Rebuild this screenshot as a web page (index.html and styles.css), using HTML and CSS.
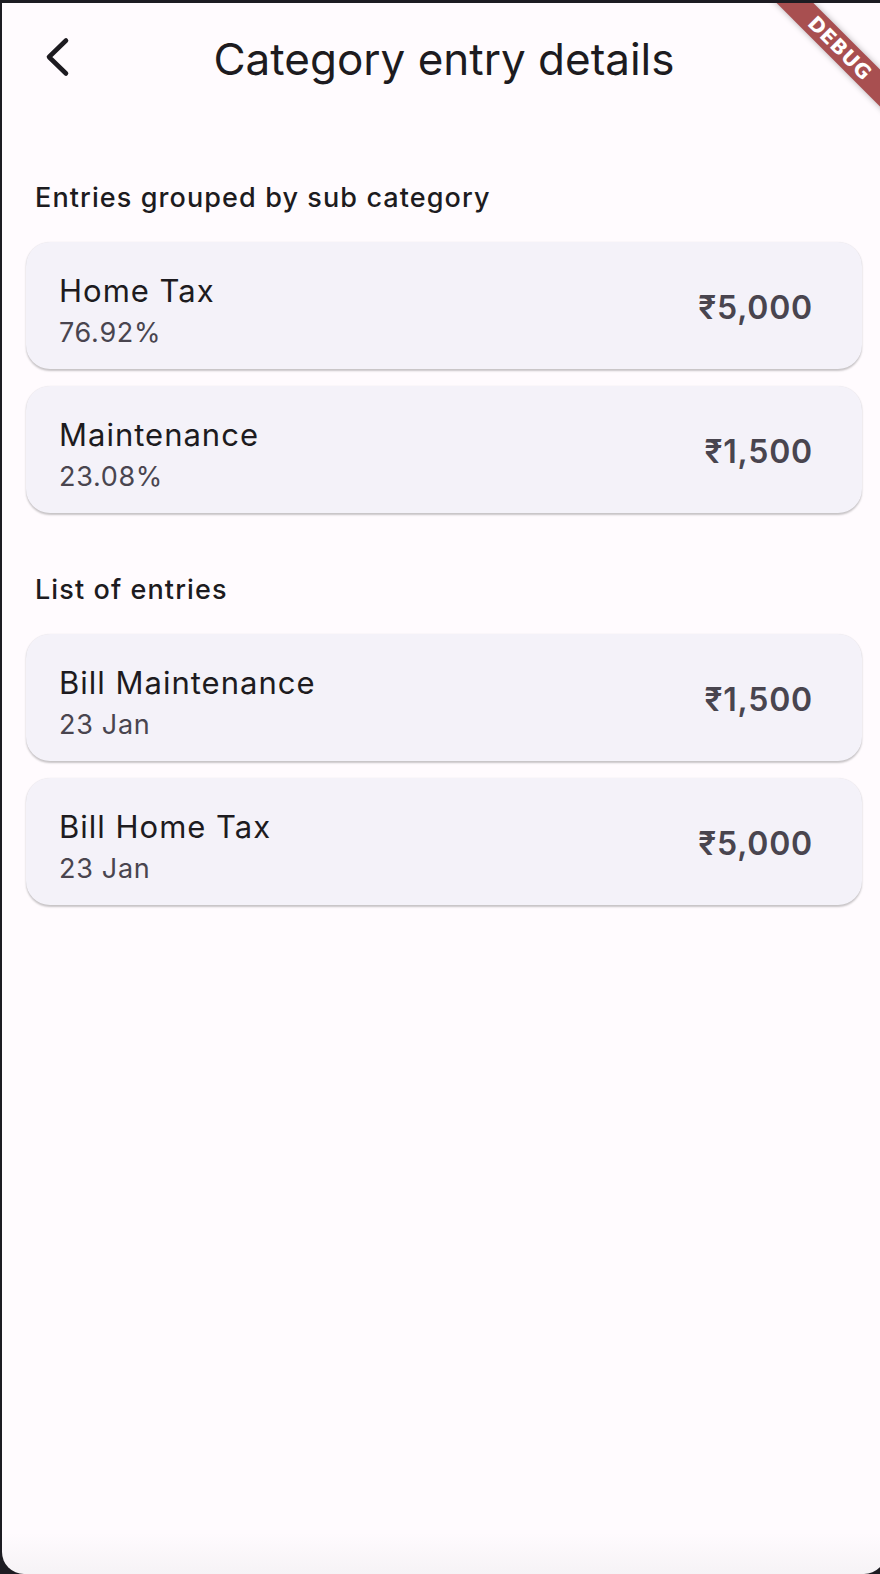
FILE: index.html
```html
<!DOCTYPE html>
<html lang="en">
<head>
<meta charset="utf-8">
<title>Category entry details</title>
<link rel="stylesheet" href="styles.css">
</head>
<body>
<div class="window">
  <header class="appbar">
    <div class="leading">
      <svg class="back" width="48" height="48" viewBox="0 0 48 48" aria-hidden="true">
        <path d="M32 5.5 L15 22 L32 38.5" fill="none" stroke="#1d1b20" stroke-width="4.6" stroke-linecap="round" stroke-linejoin="round"/>
      </svg>
    </div>
    <h1 class="title">Category entry details</h1>
    <div class="trailing"></div>
  </header>

  <main class="content">
    <h2 class="section-title first">Entries grouped by sub category</h2>
    <div class="card">
      <div class="texts">
        <div class="item-title">Home Tax</div>
        <div class="item-sub">76.92%</div>
      </div>
      <div class="amount">₹5,000</div>
    </div>
    <div class="card">
      <div class="texts">
        <div class="item-title">Maintenance</div>
        <div class="item-sub">23.08%</div>
      </div>
      <div class="amount">₹1,500</div>
    </div>

    <h2 class="section-title second">List of entries</h2>
    <div class="card">
      <div class="texts">
        <div class="item-title">Bill Maintenance</div>
        <div class="item-sub">23 Jan</div>
      </div>
      <div class="amount">₹1,500</div>
    </div>
    <div class="card">
      <div class="texts">
        <div class="item-title">Bill Home Tax</div>
        <div class="item-sub">23 Jan</div>
      </div>
      <div class="amount">₹5,000</div>
    </div>
  </main>

  <div class="debug-banner">DEBUG</div>
</div>
</body>
</html>
```

FILE: styles.css
```css
html, body {
  margin: 0;
  padding: 0;
  background: #1d1c22;
  overflow: hidden;
  width: 880px;
  height: 1574px;
}

body {
  font-family: Inter, "Noto Sans", "DejaVu Sans", sans-serif;
  color: #1d1b20;
}

.window {
  position: relative;
  margin: 3px 0 0 2px;
  width: 884px;
  height: 1571px;
  background: linear-gradient(to bottom, #fffbfe 0, #fffbfe 1530px, #f6f3f6 1571px);
  border-radius: 0 0 22px 22px;
  overflow: hidden;
}

.appbar {
  display: grid;
  grid-template-columns: 112px 1fr 112px;
  align-items: center;
  height: 112px;
}

.leading {
  display: flex;
  align-items: center;
  justify-content: center;
  height: 112px;
}

.back {
  display: block;
}

.title {
  margin: 0;
  text-align: center;
  font-size: 44px;
  font-weight: 400;
  line-height: 56px;
  letter-spacing: 0;
  color: #1d1b20;
}

.content {
  display: flex;
  flex-direction: column;
  gap: 17px;
  padding: 0 24px;
}

.section-title {
  margin: 0;
  padding-left: 9px;
  font-size: 27px;
  font-weight: 500;
  line-height: 36px;
  letter-spacing: 1.1px;
  color: #1d1b20;
}

.section-title.first {
  margin-top: 65px;
  margin-bottom: 9px;
}

.section-title.second {
  margin-top: 42px;
  margin-bottom: 9px;
}

.card {
  display: flex;
  align-items: center;
  justify-content: space-between;
  height: 127px;
  padding: 0 49px 0 33px;
  background: #f4f2f9;
  border-radius: 24px;
  box-shadow: 0 1.5px 2px rgba(0, 0, 0, 0.22), 0 0 1px rgba(0, 0, 0, 0.06);
}

.texts {
  display: flex;
  flex-direction: column;
  gap: 4px;
  padding-top: 11px;
}

.item-title {
  font-size: 31px;
  line-height: 40px;
  letter-spacing: 1px;
  color: #1d1b20;
}

.item-sub {
  font-size: 27px;
  line-height: 36px;
  letter-spacing: 0.7px;
  color: #49454f;
}

.amount {
  margin-top: 5px;
  font-size: 32px;
  font-weight: 600;
  line-height: 40px;
  letter-spacing: 0.8px;
  color: #49454f;
}

.debug-banner {
  position: absolute;
  left: 738px;
  top: 32px;
  width: 200px;
  height: 26px;
  transform: rotate(45deg);
  background: #a84f50;
  box-shadow: 0 0 6px rgba(0, 0, 0, 0.3);
  color: #ffffff;
  font-family: "DejaVu Sans", sans-serif;
  font-weight: 900;
  font-size: 20px;
  line-height: 26px;
  text-align: center;
  letter-spacing: 0.5px;
}
```
